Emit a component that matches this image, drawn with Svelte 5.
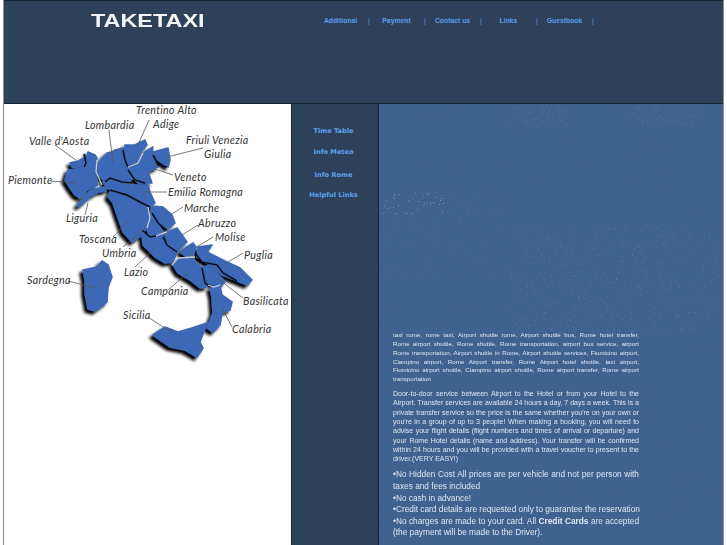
<script>
  const navLinks = ["Additional", "Payment", "Contact us", "Links", "Guestbook"];
  const sideLinks = ["Time Table", "Info Meteo", "Info Rome", "Helpful Links"];

  // map coordinates are page pixels, the viewBox moves them into the white panel
  const regions = [
    "70,163 78,161 84,158 83,165 75,168 72,167",
    "88,152 95,155 97,158 95,172 98,185 87,190 80,198 75,195 70,188 65,180 68,170 77,169 83,167",
    "77,206 85,196 90,191 98,188 106,187 106,191 98,192 90,197 80,206",
    "98,163 107,153 112,152 115,150 123,148 125,155 125,162 128,168 127,172 133,178 128,183 120,182 108,178 103,180 98,175 97,170",
    "125,145 135,145 145,140 147,145 140,153 137,162 128,165 125,155",
    "128,168 138,163 145,152 153,147 152,155 158,167 148,172 152,183 138,183 132,177",
    "153,152 168,148 170,160 168,167 158,160",
    "103,182 108,180 120,183 132,185 148,185 150,192 155,203 149,207 138,200 127,193 115,192 107,188",
    "110,192 115,193 128,197 138,203 148,208 148,218 148,225 142,235 132,242 123,232 117,215 113,203 108,197",
    "152,206 163,207 172,215 175,223 167,229 160,224 151,212",
    "150,213 157,223 163,232 150,237 147,230",
    "142,232 150,238 163,235 165,243 177,252 173,262 165,263 155,257 143,245",
    "165,233 177,228 187,242 178,250 168,245",
    "180,252 193,243 196,247 193,255 187,257",
    "198,247 212,245 207,252 225,261 240,268 252,280 247,285 235,280 222,275 210,265 197,257",
    "177,260 192,258 202,268 207,287 200,288 190,280 178,273 173,265",
    "203,267 210,265 225,282 220,287 208,283",
    "210,288 220,286 222,295 232,302 230,310 222,313 220,325 213,332 207,328 213,313 212,297",
    "153,335 165,327 178,332 192,328 207,323 200,342 203,348 197,357 185,350 170,347",
    "83,270 97,267 102,261 108,265 112,277 108,287 107,302 95,311 88,309 85,293 85,280"
  ];

  // region borders: some read as black shadow, some as pale gaps
  const darkBorders = [
    "123,150 125,160 128,167",
    "105,182 110,178 122,182 132,183",
    "128,170 135,180 145,183",
    "153,155 158,165 167,167",
    "110,190 127,195 140,202 150,207",
    "152,213 158,223 167,230",
    "142,230 150,237 156,236",
    "163,237 167,245 177,252",
    "195,253 202,262 217,265 223,273 237,281",
    "202,268 205,283 210,287",
    "84,154 86,163 84,167"
  ];
  const paleBorders = [
    "128,167 138,163 143,153",
    "97,160 96,172 102,185",
    "148,207 150,218 147,228",
    "172,265 178,258 195,257",
    "156,236 163,233 167,232",
    "208,285 214,287 220,285"
  ];

  const leaders = [
    "55,145 76,160", "50,181 77,183", "109,130 113,163", "149,120 137,147",
    "203,148 167,157", "173,175 152,168", "167,192 143,192", "183,207 170,215",
    "198,225 182,235", "213,237 195,248", "243,253 223,265", "243,298 217,278",
    "232,327 222,308", "148,317 172,333", "68,281 95,288", "135,267 155,248",
    "123,247 143,230", "113,237 128,221", "85,215 88,203", "168,290 190,271"
  ];

  const labels = [
    ["Trentino Alto", 136, 114], ["Adige", 153, 128], ["Lombardia", 85, 129],
    ["Valle d'Aosta", 29, 145], ["Friuli Venezia", 186, 144], ["Giulia", 204, 158],
    ["Piemonte", 8, 184], ["Veneto", 174, 181], ["Emilia Romagna", 168, 196],
    ["Marche", 184, 212], ["Abruzzo", 198, 227], ["Molise", 215, 241],
    ["Puglia", 244, 259], ["Liguria", 66, 222], ["Toscana", 79, 243],
    ["Umbria", 102, 257], ["Lazio", 124, 276], ["Sardegna", 27, 284],
    ["Campania", 141, 295], ["Basilicata", 243, 305], ["Sicilia", 123, 319],
    ["Calabria", 232, 333]
  ];

  const small = [
    "taxi rome, rome taxi, Airport shuttle rome, Airport shuttle bus, Rome hotel transfer,",
    "Rome airport shuttle, Rome shuttle, Rome transportation, airport bus service, airport",
    "Rome transportation, Airport shuttle in Rome, Airport shuttle services, Fiumicino airport,",
    "Ciampino airport, Rome Airport transfer, Rome Airport hotel shuttle, taxi airport,",
    "Fiumicino airport shuttle, Ciampino airport shuttle, Rome airport transfer, Rome airport"
  ];
  const mid = [
    "Door-to-door service between Airport to the Hotel or from your Hotel to the",
    "Airport. Transfer services are available 24 hours a day, 7 days a week. This is a",
    "private transfer service so the price is the same whether you're on your own or",
    "you're in a group of up to 3 people! When making a booking, you will need to",
    "advise your flight details (flight numbers and times of arrival or departure) and",
    "your Rome Hotel details (name and address). Your transfer will be confirmed",
    "within 24 hours and you will be provided with a travel voucher to present to the"
  ];

  // seeded so the speckle stays the same on every load
  let seed = 7;
  function rnd() {
    seed = (seed * 16807) % 2147483647;
    return seed / 2147483647;
  }
  function scatter(n, x, y, w, h, op) {
    return Array.from({ length: n }, () => ({
      x: Math.round(x + rnd() * w),
      y: Math.round(y + rnd() * h),
      op: op * (0.5 + rnd() * 0.5)
    }));
  }
  const specks = [
    ...scatter(900, 0, 0, 343, 441, 0.08),
    ...scatter(150, 130, 1, 60, 20, 0.14),
    ...scatter(150, 250, 1, 70, 20, 0.14),
    ...scatter(45, 3, 88, 65, 22, 0.55),
    ...scatter(300, 0, 85, 120, 90, 0.12),
    ...scatter(700, 130, 120, 213, 110, 0.22)
  ];
</script>

<div class="frame">
  <header>
    <div class="logo">TAKETAXI</div>
    <nav>
      {#each navLinks as link}
        <div class="cell">
          <a href="#top">{link}</a>
          <span class="sep">|</span>
        </div>
      {/each}
    </nav>
  </header>

  <div class="body">
    <div class="map">
      <svg viewBox="4 104 287 441" width="287" height="441" role="img" aria-label="Map of the regions of Italy">
        <defs>
          <filter id="shadow" x="-20%" y="-20%" width="140%" height="140%">
            <feDropShadow dx="-3" dy="3" stdDeviation="1.4" flood-color="#000" />
          </filter>
          <filter id="soft">
            <feGaussianBlur stdDeviation="0.35" />
          </filter>
        </defs>
        <g filter="url(#shadow)">
          {#each regions as points}
            <polygon {points} fill="#3e68b5" stroke="#3e68b5" stroke-width="1.6" stroke-linejoin="round" />
          {/each}
        </g>
        <g filter="url(#soft)" fill="none">
          {#each darkBorders as points}
            <polyline {points} stroke="#0b0f1a" stroke-width="1.5" />
          {/each}
          {#each paleBorders as points}
            <polyline {points} stroke="#c9ccd2" stroke-width="1.3" />
          {/each}
        </g>
        {#each leaders as points}
          <polyline {points} fill="none" stroke="#555" stroke-width="0.8" />
        {/each}
        {#each labels as [name, x, y]}
          <text {x} {y} class="label">{name}</text>
        {/each}
      </svg>
    </div>

    <aside>
      {#each sideLinks as link, i}
        <a href="#top" class:wide={i === 2}>{link}</a>
      {/each}
    </aside>

    <main>
      <svg class="speck" width="343" height="441" aria-hidden="true">
        {#each specks as s}
          <rect x={s.x} y={s.y} width="1" height="1" fill="#a9c0dc" opacity={s.op} />
        {/each}
      </svg>
      <div class="copy">
        <div class="small">
          {#each small as line}
            <div class="fill">{line}</div>
          {/each}
          <div>transportation</div>
        </div>
        <div class="mid">
          {#each mid as line}
            <div class="fill">{line}</div>
          {/each}
          <div>driver.(VERY EASY!)</div>
        </div>
        <div class="big">
          <div class="fill">•No Hidden Cost All prices are per vehicle and not per person with</div>
          <div>taxes and fees included</div>
          <div>•No cash in advance!</div>
          <div>•Credit card details are requested only to guarantee the reservation</div>
          <div class="fill">•No charges are made to your card. All <b>Credit Cards</b> are accepted</div>
          <div>(the payment will be made to the Driver).</div>
        </div>
      </div>
    </main>
  </div>
</div>

<style>
  :global(body) {
    background: #fff;
    overflow: hidden;
  }

  .frame {
    width: 719px;
    height: 545px;
    margin-left: 3px;
    display: flex;
    flex-direction: column;
    border-left: 1px solid #8d8d8d;
    border-right: 1px solid #8d8d8d;
    font-family: "Liberation Sans", Arial, sans-serif;
    overflow: hidden;
  }

  header {
    height: 102px;
    flex: none;
    display: flex;
    align-items: flex-start;
    background: #2d415b;
    border-top: 1px solid #1a2533;
    border-bottom: 1px solid #1a2533;
  }

  .logo {
    width: 222px;
    margin-left: 87px;
    padding-top: 10px;
    color: #f4f4f4;
    font-size: 18px;
    line-height: 20px;
    font-weight: 700;
    transform: scaleX(1.3);
    transform-origin: left center;
  }

  nav {
    display: grid;
    grid-template-columns: repeat(5, 56px);
    padding-top: 14px;
  }

  .cell {
    display: flex;
    align-items: center;
    height: 10px;
    font-size: 6.8px;
    font-weight: 700;
    color: #5b9de6;
  }

  .cell a {
    flex: 1;
    text-align: center;
    color: inherit;
    text-decoration: none;
  }

  .sep {
    width: 1px;
    font-weight: 400;
  }

  .body {
    flex: 1;
    display: flex;
    min-height: 0;
  }

  .map {
    width: 287px;
    flex: none;
    background: #fff;
  }

  .map svg {
    display: block;
  }

  .label {
    font-family: Lato, sans-serif;
    font-style: italic;
    font-size: 10.7px;
    letter-spacing: 0.3px;
    fill: #333;
  }

  aside {
    width: 83px;
    flex: none;
    display: flex;
    flex-direction: column;
    align-items: center;
    padding: 23px 3px 0 0;
    background: #2d415b;
    border-left: 1px solid #1a2533;
    border-right: 1px solid #1a2533;
  }

  aside a {
    height: 20.5px;
    line-height: 8px;
    color: #5fa2ec;
    font-family: "DejaVu Sans", Verdana, sans-serif;
    font-size: 6.6px;
    font-weight: 700;
    text-decoration: none;
  }

  aside a.wide {
    margin-top: 2.5px;
  }

  main {
    position: relative;
    flex: 1;
    display: flex;
    flex-direction: column;
    justify-content: flex-end;
    background: #3f628f;
  }

  .speck {
    position: absolute;
    top: 0;
    left: 0;
    pointer-events: none;
  }

  .copy {
    position: relative;
    width: 246px;
    margin-left: 14px;
    padding-bottom: 6px;
    color: #dfe6ef;
    will-change: transform;
  }

  .fill {
    text-align: justify;
    text-align-last: justify;
  }

  .small {
    font-size: 6.2px;
    line-height: 8.85px;
    margin-bottom: 5px;
  }

  .mid {
    font-size: 7px;
    line-height: 9.3px;
    margin-bottom: 6px;
  }

  .big {
    font-size: 8.3px;
    line-height: 11.6px;
    white-space: nowrap;
  }
</style>
